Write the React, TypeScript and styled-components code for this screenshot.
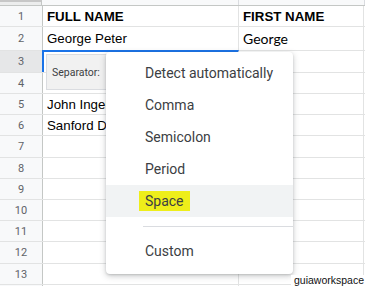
import * as React from 'react';
import styled, { createGlobalStyle } from 'styled-components';

const GlobalStyle = createGlobalStyle`
  html, body {
    margin: 0;
    padding: 0;
    background: #ffffff;
    overflow: hidden;
  }
`;

const Sheet = styled.div`
  position: relative;
  width: 365px;
  height: 286px;
  overflow: hidden;
  background: #ffffff;
  font-family: 'Liberation Sans', Arial, sans-serif;
`;

const HeaderStrip = styled.div`
  display: flex;
  height: 5px;
  border-bottom: 1px solid #c4c7c5;
  background: #f8f9fa;
`;
const Corner = styled.div`
  width: 42px;
  border-top: 2px solid #c7c7c7;
  border-right: 1px solid #c4c7c5;
  background: #eceded;
`;
const ColHead = styled.div<{ $w: number }>`
  width: ${(p) => p.$w}px;
  flex: none;
  border-right: 1px solid #dadce0;
`;

const Row = styled.div<{ $h: number }>`
  display: flex;
  height: ${(p) => p.$h}px;
  border-bottom: 1px solid #e2e3e3;
`;
const RowHead = styled.div<{ $active?: boolean }>`
  width: 42px;
  flex: none;
  display: flex;
  align-items: center;
  justify-content: center;
  border-right: 1px solid #c4c7c5;
  background: ${(p) => (p.$active ? '#e6e7e8' : '#f8f9fa')};
  color: #5f6368;
  font-family: 'Roboto', sans-serif;
  font-size: 11px;
`;
const Cell = styled.div<{ $w: number; $bold?: boolean; $calibri?: boolean; $selected?: boolean }>`
  width: ${(p) => p.$w}px;
  flex: none;
  box-sizing: border-box;
  display: flex;
  align-items: center;
  padding-left: 4px;
  border-right: 1px solid #e2e3e3;
  font-family: ${(p) =>
    p.$calibri && !p.$bold ? "'Lato', 'Open Sans', sans-serif" : "'Liberation Sans', Arial, sans-serif"};
  font-size: ${(p) => (p.$calibri && !p.$bold ? '14px' : '13.3px')};
  font-weight: ${(p) => (p.$bold ? 700 : 400)};
  color: #000000;
  white-space: nowrap;
  overflow: hidden;
  ${(p) =>
    p.$selected &&
    `
    border-top: 2px solid #1a73e8;
    border-left: 2px solid #1a73e8;
    margin-top: -1px;
    margin-left: -1px;
    width: ${p.$w + 1}px;
  `}
`;

const SeparatorBox = styled.div`
  position: absolute;
  left: 46px;
  top: 54px;
  width: 61px;
  height: 36px;
  box-sizing: border-box;
  display: flex;
  align-items: center;
  padding-left: 5px;
  background: #f1f1f1;
  border: 1px solid #dadce0;
  font-family: 'Roboto', sans-serif;
  font-size: 10.5px;
  color: #3c4043;
`;

const Menu = styled.div`
  position: absolute;
  left: 106px;
  top: 52px;
  width: 187px;
  box-sizing: border-box;
  padding: 5px 0 7px;
  background: #ffffff;
  border-radius: 4px;
  box-shadow: 0 2px 6px rgba(60, 64, 67, 0.28), 0 1px 2px rgba(60, 64, 67, 0.18);
  font-family: 'Roboto', sans-serif;
`;
const MenuItem = styled.div<{ $hover?: boolean }>`
  height: 32px;
  display: flex;
  align-items: center;
  padding-left: 39px;
  font-size: 14px;
  color: #3c4043;
  background: ${(p) => (p.$hover ? '#f1f3f4' : 'transparent')};
`;
const Mark = styled.span`
  margin-left: -6px;
  padding: 2px 6px;
  background: #eeee1a;
`;
const Divider = styled.div`
  height: 1px;
  margin: 9px 0 8px 37px;
  background: #dadce0;
`;

const Watermark = styled.div`
  position: absolute;
  right: 0;
  bottom: 0;
  padding: 0 1px 1px 3px;
  height: 10px;
  line-height: 10px;
  background: #ffffff;
  font-family: 'Liberation Sans', Arial, sans-serif;
  font-size: 10.5px;
  color: #111111;
`;

const COL_A = 196;
const COL_B = 125;

const rows: { n: number; h: number; a?: string; b?: string; bold?: boolean }[] = [
  { n: 1, h: 20, a: 'FULL NAME', b: 'FIRST NAME', bold: true },
  { n: 2, h: 23, a: 'George Peter', b: 'George' },
  { n: 3, h: 21 },
  { n: 4, h: 20 },
  { n: 5, h: 20, a: 'John Ingersoll' },
  { n: 6, h: 20, a: 'Sanford Dole' },
  { n: 7, h: 21 },
  { n: 8, h: 20 },
  { n: 9, h: 20 },
  { n: 10, h: 20 },
  { n: 11, h: 20 },
  { n: 12, h: 21 },
  { n: 13, h: 20 },
  { n: 14, h: 20 },
];

const separators = ['Detect automatically', 'Comma', 'Semicolon', 'Period'];

export default function App() {
  return (
    <Sheet>
      <GlobalStyle />
      <HeaderStrip>
        <Corner />
        <ColHead $w={COL_A} />
        <ColHead $w={COL_B} />
      </HeaderStrip>
      {rows.map((r) => (
        <Row key={r.n} $h={r.h}>
          {/* the last row is only a sliver at the bottom edge, its number falls outside */}
          <RowHead $active={r.n === 3}>{r.n < 14 ? r.n : null}</RowHead>
          <Cell $w={COL_A} $bold={r.bold} $selected={r.n === 3}>
            {r.a}
          </Cell>
          <Cell $w={COL_B} $bold={r.bold} $calibri>
            {r.b}
          </Cell>
        </Row>
      ))}
      <SeparatorBox>Separator:</SeparatorBox>
      <Menu>
        {separators.map((s) => (
          <MenuItem key={s}>{s}</MenuItem>
        ))}
        <MenuItem $hover>
          <Mark>Space</Mark>
        </MenuItem>
        <Divider />
        <MenuItem>Custom</MenuItem>
      </Menu>
      <Watermark>guiaworkspace</Watermark>
    </Sheet>
  );
}
